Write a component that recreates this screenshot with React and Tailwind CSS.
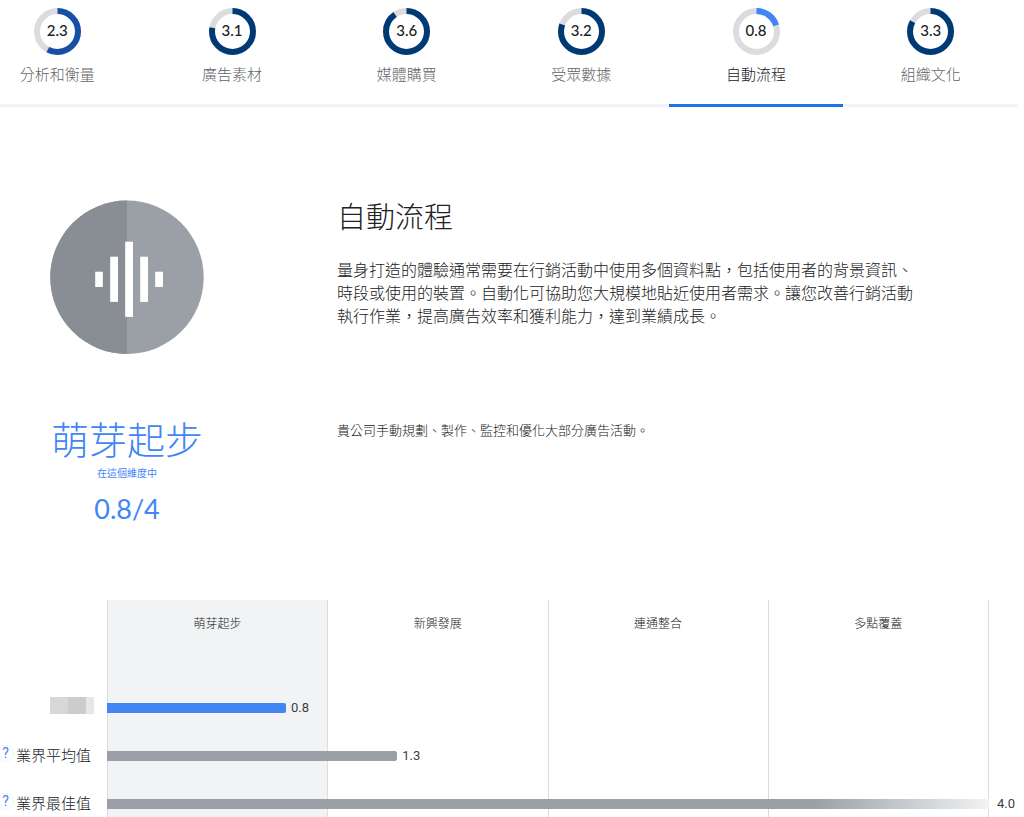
import React from "react";

const tabs = [
  { score: 2.3, label: "分析和衡量", ring: "#174ea6" },
  { score: 3.1, label: "廣告素材", ring: "#003a75" },
  { score: 3.6, label: "媒體購買", ring: "#003a75" },
  { score: 3.2, label: "受眾數據", ring: "#003a75" },
  { score: 0.8, label: "自動流程", ring: "#4285f4", active: true },
  { score: 3.3, label: "組織文化", ring: "#003a75" },
];

const stages = ["萌芽起步", "新興發展", "連通整合", "多點覆蓋"];

const rows = [
  { label: null, value: "0.8", percent: 20.3, bar: "bg-[#4285f4] rounded-r-xs" },
  { label: "業界平均值", value: "1.3", percent: 32.9, bar: "bg-[#9aa0a6] rounded-r-xs" },
  {
    label: "業界最佳值",
    value: "4.0",
    percent: 100,
    bar: "bg-linear-to-r from-[#9aa0a6] from-80% to-[#f1f3f4]",
  },
];

function ScoreRing({ score, color }) {
  const length = 2 * Math.PI * 20.5;
  return (
    <span className="relative grid size-[47px] place-items-center pb-[3px]">
      <svg viewBox="0 0 47 47" className="absolute inset-0 -rotate-90" aria-hidden="true">
        <circle cx="23.5" cy="23.5" r="20.5" fill="none" stroke="#dadce0" strokeWidth="6" />
        <circle
          cx="23.5"
          cy="23.5"
          r="20.5"
          fill="none"
          stroke={color}
          strokeWidth="6"
          strokeDasharray={`${(length * score) / 4} ${length}`}
        />
      </svg>
      <span className="relative font-['Lato','Noto_Sans_CJK_TC',sans-serif] text-[15px] leading-5 font-medium text-[#202124]">
        {score.toFixed(1)}
      </span>
    </span>
  );
}

function Tab({ tab }) {
  return (
    <button
      type="button"
      role="tab"
      aria-selected={!!tab.active}
      className={`flex flex-1 cursor-pointer flex-col items-center border-b-3 pt-2 pb-5 ${
        tab.active ? "border-[#1a73e8] text-[#202124]" : "border-[#f1f3f4] text-[#5f6368]"
      }`}
    >
      <ScoreRing score={tab.score} color={tab.ring} />
      <span className="mt-2 text-[15px] leading-[21px] font-light">{tab.label}</span>
    </button>
  );
}

function WaveIcon() {
  return (
    <svg viewBox="0 0 154 154" className="size-[154px]" aria-hidden="true">
      <circle cx="77" cy="77.3" r="76.7" fill="#9aa0a6" />
      <path d="M77 0.6a76.7 76.7 0 0 0 0 153.4z" fill="#898e95" />
      <g fill="#fff">
        <rect x="45.2" y="71.7" width="7.6" height="15.3" />
        <rect x="60.2" y="56.7" width="7.8" height="45.2" />
        <rect x="75.2" y="41.7" width="7.8" height="75.2" />
        <rect x="90.2" y="56.7" width="7.8" height="45.2" />
        <rect x="105.2" y="71.7" width="7.8" height="15.3" />
      </g>
    </svg>
  );
}

function ChartRow({ row }) {
  return (
    <div className="flex h-[22px] items-center">
      <div className="flex w-[107px] shrink-0 items-center self-start">
        {row.label ? (
          <div className="flex flex-1 items-start justify-between pr-4">
            <button
              type="button"
              aria-label={`${row.label}說明`}
              className="-ml-[3px] size-[17px] shrink-0 cursor-pointer rounded-full border border-[#f1f3f4] text-center font-['Roboto',sans-serif] text-[14px] leading-[15px] text-[#4285f4]"
            >
              ?
            </button>
            <span className="text-[15px] leading-5 font-light whitespace-nowrap">{row.label}</span>
          </div>
        ) : (
          <div className="flex h-[17px] flex-1 justify-end pr-[13px]">
            <span className="w-[18px] bg-[#d5d7d9]" />
            <span className="w-[18px] bg-[#cccccc]" />
            <span className="w-2 bg-[#e6e7e9]" />
          </div>
        )}
      </div>
      <div className="mr-[35px] flex flex-1 items-center">
        <div className={`h-[10px] shrink-0 ${row.bar}`} style={{ width: `${row.percent}%` }} />
        <span
          className={`font-['Roboto',sans-serif] text-[13px] leading-[22px] text-[#3c4043] ${
            row.percent === 100 ? "pl-2" : "pl-[5px]"
          }`}
        >
          {row.value}
        </span>
      </div>
    </div>
  );
}

export default function App() {
  return (
    <main className="overflow-x-hidden bg-white font-['Noto_Sans_CJK_TC','Liberation_Sans',sans-serif] text-[#202124]">
      <nav role="tablist" aria-label="維度" className="mr-[6px] -ml-[30px] flex">
        {tabs.map((tab) => (
          <Tab key={tab.label} tab={tab} />
        ))}
      </nav>

      <section className="flex gap-[83px] pt-[93px]">
        <div className="flex w-[254px] shrink-0 justify-center">
          <WaveIcon />
        </div>
        <div>
          <h1 className="text-[29px] leading-[30px] font-light">自動流程</h1>
          <p className="mt-7 max-w-[588px] text-[16px] leading-[23px] font-light">
            量身打造的體驗通常需要在行銷活動中使用多個資料點，包括使用者的背景資訊、時段或使用的裝置。自動化可協助您大規模地貼近使用者需求。讓您改善行銷活動執行作業，提高廣告效率和獲利能力，達到業績成長。
          </p>
        </div>
      </section>

      <section className="flex gap-[83px] pt-[64px]">
        <div className="flex w-[254px] shrink-0 flex-col items-center text-[#4285f4]">
          <h2 className="text-[38px] leading-[40px] font-light">萌芽起步</h2>
          <p className="mt-2 text-[10px] leading-[14px]">在這個維度中</p>
          <p className="mt-3 font-['Lato',sans-serif] text-[27px] leading-[34px]">0.8/4</p>
        </div>
        <p className="pt-[3px] text-[13px] leading-[18px] font-light">
          貴公司手動規劃、製作、監控和優化大部分廣告活動。
        </p>
      </section>

      <section className="relative mt-[74px]">
        <div className="absolute inset-y-0 right-[35px] left-[107px] grid grid-cols-4 border-r border-[#dadce0]">
          {stages.map((stage, i) => (
            <div
              key={stage}
              className={`border-l border-[#dadce0] pt-[14px] text-center text-[12px] leading-[18px] font-light ${
                i === 0 ? "bg-[#f1f3f4]" : ""
              }`}
            >
              {stage}
            </div>
          ))}
        </div>
        <div className="relative flex flex-col gap-[26px] pt-[97px] pb-[2px]">
          {rows.map((row) => (
            <ChartRow key={row.value} row={row} />
          ))}
        </div>
      </section>
    </main>
  );
}
